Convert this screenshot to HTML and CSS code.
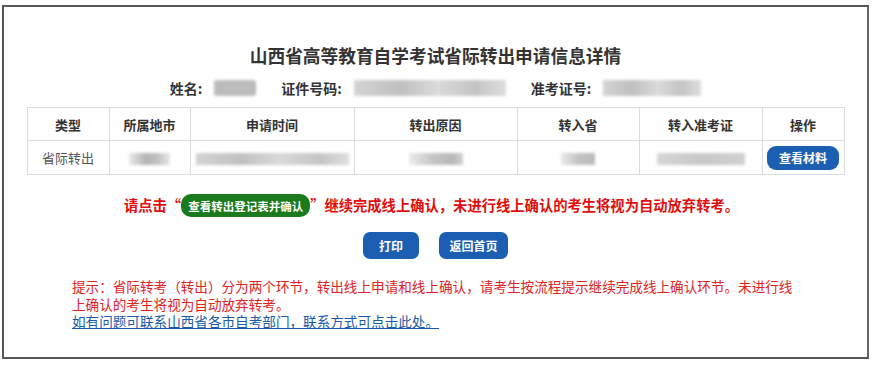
FILE: index.html
```html
<!DOCTYPE html>
<html lang="zh-CN">
<head>
<meta charset="utf-8">
<title>山西省高等教育自学考试省际转出申请信息详情</title>
<link rel="stylesheet" href="styles.css">
</head>
<body>
<div class="frame">
  <h1 class="title">山西省高等教育自学考试省际转出申请信息详情</h1>
  <div class="info">
    <span class="label">姓名:</span><span class="blur b-name"></span>
    <span class="label">证件号码:</span><span class="blur b-id"></span>
    <span class="label">准考证号:</span><span class="blur b-ticket"></span>
  </div>
  <table class="grid">
    <colgroup>
      <col class="c1"><col class="c2"><col class="c3"><col class="c4"><col class="c5"><col class="c6"><col class="c7">
    </colgroup>
    <thead>
      <tr><th>类型</th><th>所属地市</th><th>申请时间</th><th>转出原因</th><th>转入省</th><th>转入准考证</th><th>操作</th></tr>
    </thead>
    <tbody>
      <tr>
        <td class="plain">省际转出</td>
        <td><span class="blur b-city"></span></td>
        <td><span class="blur b-time"></span></td>
        <td><span class="blur b-reason"></span></td>
        <td><span class="blur b-prov"></span></td>
        <td><span class="blur b-ticket2"></span></td>
        <td><a class="btn btn-sm" href="#">查看材料</a></td>
      </tr>
    </tbody>
  </table>
  <p class="notice">请点击“<a class="btn-green" href="#">查看转出登记表并确认</a>”继续完成线上确认，未进行线上确认的考生将视为自动放弃转考。</p>
  <div class="actions">
    <a class="btn btn-lg btn-print" href="#">打印</a>
    <a class="btn btn-lg btn-home" href="#">返回首页</a>
  </div>
  <div class="hint">
    <p class="hint-text">提示：省际转考（转出）分为两个环节，转出线上申请和线上确认，请考生按流程提示继续完成线上确认环节。未进行线上确认的考生将视为自动放弃转考。</p>
    <a class="hint-link" href="#">如有问题可联系山西省各市自考部门，联系方式可点击此处。</a>
  </div>
</div>
</body>
</html>
```
FILE: styles.css
```css
* { box-sizing: border-box; }
html, body { margin: 0; padding: 0; background: #fff; }
body {
  font-family: "Noto Sans CJK SC", "Noto Sans", sans-serif;
  color: #333;
}
.frame {
  width: 867px;
  height: 354px;
  margin: 5px 0 0 2px;
  border: 2px solid #555;
  border-right-color: #666;
  padding-top: 34px;
}
.title {
  margin: 0;
  text-align: center;
  font-size: 17.7px;
  letter-spacing: 0;
  line-height: 28px;
  font-weight: bold;
  color: #333;
}
.info {
  margin-top: 9px;
  height: 20px;
  display: flex;
  justify-content: center;
  align-items: center;
  font-size: 14px;
  font-weight: bold;
  color: #333;
}
.info .label { margin-left: 25px; margin-right: 12px; line-height: 20px; }
.info .label:first-child { margin-left: 0; }
.blur {
  display: inline-block;
  background: linear-gradient(90deg, #d4d4d4 0%, #c0c0c0 30%, #dadada 55%, #c4c4c4 80%, #dedede 100%);
  filter: blur(1.5px);
  vertical-align: middle;
}
.b-name { width: 42px; height: 16px; background: #bcbcbc; border-radius: 3px; }
.b-id { width: 152px; height: 16px; }
.b-ticket { width: 98px; height: 16px; }
.grid {
  margin: 9px auto 0;
  width: 817px;
  border-collapse: collapse;
  table-layout: fixed;
  font-size: 13px;
}
.c1 { width: 82px; } .c2 { width: 81px; } .c3 { width: 164px; } .c4 { width: 163px; }
.c5 { width: 122px; } .c6 { width: 123px; } .c7 { width: 82px; }
.grid th, .grid td {
  border: 1px solid #dcdcdc;
  text-align: center;
  padding: 0;
}
.grid th { height: 33px; font-weight: bold; color: #333; }
.grid td { height: 34px; color: #555; }
.grid td.plain { color: #555; }
.b-city { width: 41px; height: 12px; background: linear-gradient(90deg, #eaeaea, #b4b4b4 40%, #c2c2c2 70%, #e8e8e8); }
.b-time { width: 153px; height: 12px; }
.b-reason { width: 54px; height: 12px; background: linear-gradient(90deg, #ececec, #c8c8c8 40%, #b8b8b8 80%, #d2d2d2); }
.b-prov { width: 34px; height: 12px; background: linear-gradient(90deg, #eaeaea, #c4c4c4 50%, #bababa); }
.b-ticket2 { width: 88px; height: 12px; background: linear-gradient(90deg, #d6d6d6, #c8c8c8 50%, #d0d0d0); }
.btn {
  display: inline-flex;
  align-items: center;
  justify-content: center;
  background: #1c5fb2;
  color: #fff;
  font-weight: bold;
  text-decoration: none;
  font-size: 12px;
}
.btn-sm { width: 72px; height: 24px; border-radius: 9px; vertical-align: middle; }
.notice {
  margin: 18px 0 0;
  padding-right: 8px;
  text-align: center;
  font-size: 14.3px;
  line-height: 24px;
  font-weight: bold;
  color: #e00e0e;
}
.btn-green {
  display: inline-flex;
  align-items: center;
  vertical-align: middle;
  height: 23px;
  padding: 0 7px;
  margin-top: -3px;
  border-radius: 10px;
  background: #1b7a1b;
  color: #fff;
  font-size: 11.5px;
  text-decoration: none;
  font-weight: bold;
}
.actions {
  margin-top: 15px;
  display: flex;
  justify-content: center;
  gap: 20px;
}
.btn-lg { height: 27px; border-radius: 7px; font-size: 12px; }
.btn-print { width: 56px; }
.btn-home { width: 69px; }
.hint {
  margin: 19px 0 0 68px;
  width: 730px;
  font-size: 13.6px;
  line-height: 17.5px;
}
.hint-text { margin: 0; color: #e02424; }
.hint-link { color: #1a5aa6; text-decoration: underline; }
```
